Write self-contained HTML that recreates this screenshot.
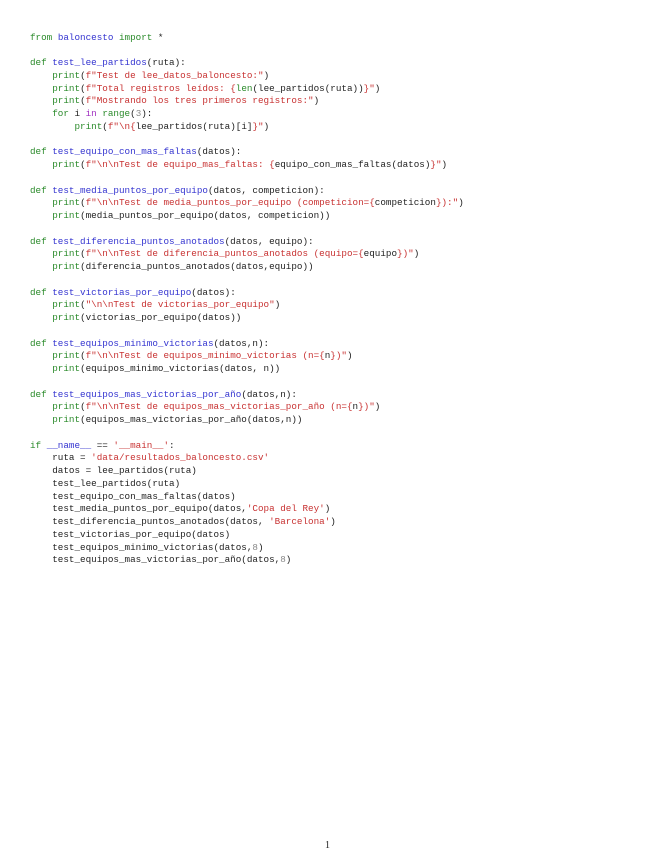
<!DOCTYPE html>
<html><head><meta charset="utf-8"><style>
html,body{margin:0;padding:0;background:#fff;width:655px;height:848px;overflow:hidden;position:relative}
pre{position:absolute;left:30px;top:31.5px;margin:0;font-family:"Liberation Mono",monospace;font-size:9.27px;line-height:12.75px;color:#222;letter-spacing:0}
.k{color:#2a8a2a}.f{color:#3434d0}.s{color:#c83232}.n{color:#888}.p{color:#a030c0}
.pg{position:absolute;left:325px;top:840px;font-family:"Liberation Serif",serif;font-size:10px;color:#222}
</style></head><body>
<pre><span class="k">from</span> <span class="f">baloncesto</span> <span class="k">import</span> *

<span class="k">def</span> <span class="f">test_lee_partidos</span>(ruta):
    <span class="k">print</span>(<span class="s">f"Test de lee_datos_baloncesto:"</span>)
    <span class="k">print</span>(<span class="s">f"Total registros leídos: {</span><span class="k">len</span>(lee_partidos(ruta))<span class="s">}"</span>)
    <span class="k">print</span>(<span class="s">f"Mostrando los tres primeros registros:"</span>)
    <span class="k">for</span> i <span class="p">in</span> <span class="k">range</span>(<span class="n">3</span>):
        <span class="k">print</span>(<span class="s">f"\n{</span>lee_partidos(ruta)[i]<span class="s">}"</span>)

<span class="k">def</span> <span class="f">test_equipo_con_mas_faltas</span>(datos):
    <span class="k">print</span>(<span class="s">f"\n\nTest de equipo_mas_faltas: {</span>equipo_con_mas_faltas(datos)<span class="s">}"</span>)

<span class="k">def</span> <span class="f">test_media_puntos_por_equipo</span>(datos, competicion):
    <span class="k">print</span>(<span class="s">f"\n\nTest de media_puntos_por_equipo (competicion={</span>competicion<span class="s">}):"</span>)
    <span class="k">print</span>(media_puntos_por_equipo(datos, competicion))

<span class="k">def</span> <span class="f">test_diferencia_puntos_anotados</span>(datos, equipo):
    <span class="k">print</span>(<span class="s">f"\n\nTest de diferencia_puntos_anotados (equipo={</span>equipo<span class="s">})"</span>)
    <span class="k">print</span>(diferencia_puntos_anotados(datos,equipo))

<span class="k">def</span> <span class="f">test_victorias_por_equipo</span>(datos):
    <span class="k">print</span>(<span class="s">"\n\nTest de victorias_por_equipo"</span>)
    <span class="k">print</span>(victorias_por_equipo(datos))

<span class="k">def</span> <span class="f">test_equipos_minimo_victorias</span>(datos,n):
    <span class="k">print</span>(<span class="s">f"\n\nTest de equipos_minimo_victorias (n={</span>n<span class="s">})"</span>)
    <span class="k">print</span>(equipos_minimo_victorias(datos, n))

<span class="k">def</span> <span class="f">test_equipos_mas_victorias_por_año</span>(datos,n):
    <span class="k">print</span>(<span class="s">f"\n\nTest de equipos_mas_victorias_por_año (n={</span>n<span class="s">})"</span>)
    <span class="k">print</span>(equipos_mas_victorias_por_año(datos,n))

<span class="k">if</span> <span class="f">__name__</span> == <span class="s">'__main__'</span>:
    ruta = <span class="s">'data/resultados_baloncesto.csv'</span>
    datos = lee_partidos(ruta)
    test_lee_partidos(ruta)
    test_equipo_con_mas_faltas(datos)
    test_media_puntos_por_equipo(datos,<span class="s">'Copa del Rey'</span>)
    test_diferencia_puntos_anotados(datos, <span class="s">'Barcelona'</span>)
    test_victorias_por_equipo(datos)
    test_equipos_minimo_victorias(datos,<span class="n">8</span>)
    test_equipos_mas_victorias_por_año(datos,<span class="n">8</span>)</pre>
<div class="pg">1</div>
</body></html>
